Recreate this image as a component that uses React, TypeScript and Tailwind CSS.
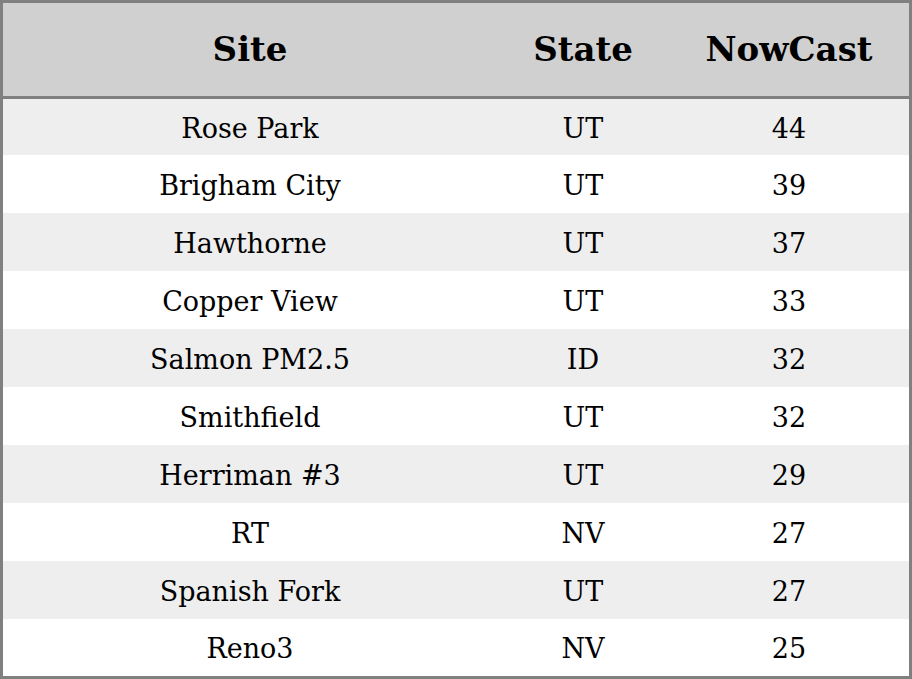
import React from "react";

const rows: [string, string, string][] = [
  ["Rose Park", "UT", "44"],
  ["Brigham City", "UT", "39"],
  ["Hawthorne", "UT", "37"],
  ["Copper View", "UT", "33"],
  ["Salmon PM2.5", "ID", "32"],
  ["Smithfield", "UT", "32"],
  ["Herriman #3", "UT", "29"],
  ["RT", "NV", "27"],
  ["Spanish Fork", "UT", "27"],
  ["Reno3", "NV", "25"],
];

export default function App() {
  return (
    <div
      className="w-[912px] h-[679px] bg-white border-[3px] border-[#808080] text-black flex flex-col"
      style={{ fontFamily: '"DejaVu Serif", serif' }}
    >
      <div className="grid grid-cols-[494px_172px_240px] h-[96px] bg-[#d0d0d0] border-b-[3px] border-[#808080] items-center text-center font-bold text-[34px]">
        <div>Site</div>
        <div>State</div>
        <div>NowCast</div>
      </div>
      {rows.map((r, i) => (
        <div
          key={i}
          className={
            "grid grid-cols-[494px_172px_240px] items-center text-center text-[27px] pt-[4px] " +
            (i === 0 ? "h-[56px] " : i === rows.length - 1 ? "h-[57px] " : "h-[58px] ") +
            (i % 2 === 0 ? "bg-[#eeeeee]" : "bg-white")
          }
        >
          <div>{r[0]}</div>
          <div>{r[1]}</div>
          <div>{r[2]}</div>
        </div>
      ))}
    </div>
  );
}
